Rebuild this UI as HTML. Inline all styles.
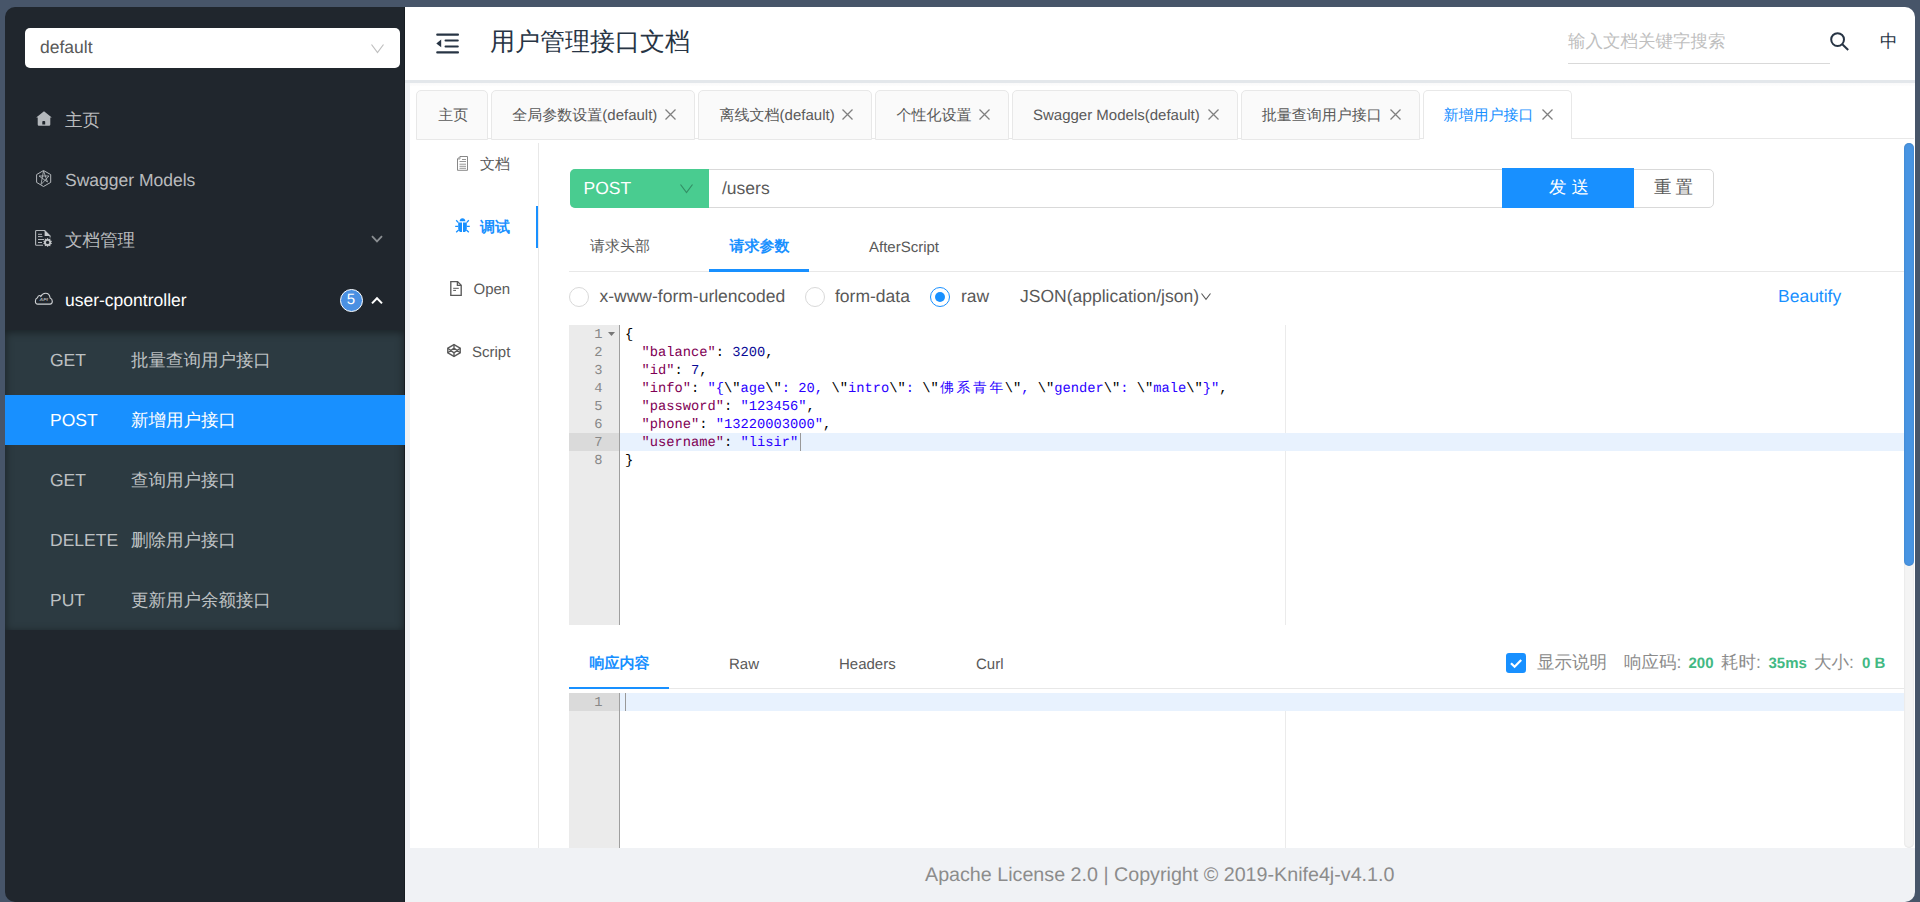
<!DOCTYPE html>
<html><head><meta charset="utf-8">
<style>
*{box-sizing:border-box;margin:0;padding:0}
html,body{width:1920px;height:902px;overflow:hidden;background:#475569;font-family:"Liberation Sans",sans-serif;position:relative;text-rendering:geometricPrecision}
.a{position:absolute;white-space:nowrap}
svg.a{overflow:visible}
#side{left:5px;top:7px;width:400px;height:895px;background:#20262d;border-radius:10px 0 0 10px;border-right:1px solid #171c21;overflow:hidden}
.mi{font-size:17.5px;color:rgba(255,255,255,.7);line-height:20px}
#sub{left:5px;top:330px;width:399px;height:300px;background:#2c3a41;box-shadow:inset 0 2px 8px rgba(0,0,0,.45)}
.sm{font-size:17.5px;color:rgba(255,255,255,.7);line-height:20px}
#head{left:405px;top:7px;width:1510px;height:73px;background:#fff;border-radius:0 10px 0 0}
#hshadow{left:405px;top:80px;width:1510px;height:3px;background:#e3e7eb;box-shadow:0 3px 3px -1px rgba(0,0,0,.02)}
#cont{left:405px;top:83px;width:1510px;height:765px;background:#f0f2f5}
#main{left:410px;top:83px;width:1505px;height:765px;background:#fff}
.tab{top:90px;height:50px;background:#fafafa;border:1px solid #e8e8e8;border-radius:5px 5px 0 0}
.tt{font-size:15px;color:#595959;line-height:20px;top:106px}
#foot{left:405px;top:848px;width:1510px;height:54px;background:#f0f2f5;border-radius:0 0 10px 0}
.ft{font-size:19.7px;color:#8c8c8c;line-height:20px}
.nv{font-size:15px;line-height:20px;color:#595959}
.nt{font-size:15px;line-height:20px;color:#595959}
.rd{width:20px;height:20px;border:1px solid #d9d9d9;border-radius:50%;background:#fff}
.rt{top:286px;font-size:17.5px;line-height:20px;color:#595959}
.cl{left:625px;padding-top:1.5px;font-family:"Liberation Mono",monospace;font-size:13.75px;line-height:18px;height:18px;white-space:pre;color:#000}
.cl b{font-weight:normal}
.k{color:#7f0055}.n{color:#0a0a96}.s{color:#2a00ff}
.e{font-style:normal;color:#000}
.cj{display:inline-block;width:16.5px;text-align:center;font-style:normal}
.gn{left:569px;padding-top:2px;width:33.5px;text-align:right;font-family:"Liberation Mono",monospace;font-size:13.75px;line-height:18px;color:#888}
.gr{top:654px;font-size:15px;line-height:20px;color:#42b983;font-weight:bold}
</style></head><body>
<!-- sidebar -->
<div id="side" class="a"></div>
<div class="a" style="left:25px;top:28px;width:375px;height:40px;background:#fff;border-radius:5px"></div>
<div class="a" style="left:40px;top:37px;font-size:17.5px;color:#595959;line-height:20px">default</div>
<svg class="a" style="left:371px;top:44px" width="13" height="9" viewBox="0 0 13 9"><path d="M0.5 0.5 L6.5 8.5 L12.5 0.5" fill="none" stroke="#bfbfbf" stroke-width="1.2"/></svg>

<div class="a mi" style="left:65px;top:110px">主页</div>
<div class="a mi" style="left:65px;top:170px">Swagger Models</div>
<div class="a mi" style="left:65px;top:230px">文档管理</div>
<div class="a mi" style="left:65px;top:290px;color:#fff">user-cpontroller</div>

<div id="sub" class="a"></div>
<div class="a" style="left:5px;top:395px;width:400px;height:50px;background:#1890ff"></div>
<div class="a sm" style="left:50px;top:350px">GET</div><div class="a sm" style="left:131px;top:350px">批量查询用户接口</div>
<div class="a sm" style="left:50px;top:410px;color:#fff">POST</div><div class="a sm" style="left:131px;top:410px;color:#fff">新增用户接口</div>
<div class="a sm" style="left:50px;top:470px">GET</div><div class="a sm" style="left:131px;top:470px">查询用户接口</div>
<div class="a sm" style="left:50px;top:530px">DELETE</div><div class="a sm" style="left:131px;top:530px">删除用户接口</div>
<div class="a sm" style="left:50px;top:590px">PUT</div><div class="a sm" style="left:131px;top:590px">更新用户余额接口</div>

<!-- header -->
<div id="head" class="a"></div>
<div id="hshadow" class="a"></div>
<div id="cont" class="a"></div>
<div id="main" class="a"></div>
<div class="a" style="left:410px;top:83px;width:1505px;height:3px;background:linear-gradient(#f9f9fa,#fdfdfd)"></div>
<div id="foot" class="a"></div>
<!-- sidebar icons -->
<svg class="a" style="left:36px;top:111px" width="16" height="15" viewBox="0 0 16 15"><path d="M8 0.3 L15.8 6.6 L14.3 6.6 L14.3 13.6 Q14.3 14.8 13.1 14.8 L2.9 14.8 Q1.7 14.8 1.7 13.6 L1.7 6.6 L0.2 6.6 Z M6.3 13.6 L6.3 10.8 Q6.3 9.9 7.2 9.9 L8.3 9.9 Q9.2 9.9 9.2 10.8 L9.2 13.6 Z" fill="#b4b8bc" fill-rule="evenodd"/></svg>
<svg class="a" style="left:36px;top:170px" width="16" height="17" viewBox="0 0 16 17" fill="none" stroke="#b4b8bc" stroke-width="1"><path d="M7.5 0.5 L14.7 4.6 L14.7 12.4 L7.5 16.5 L0.6 12.4 L0.6 4.6 Z"/><path d="M7.5 1 L11.5 12 L3 6 L13 6 L5 14.5 Z" stroke-width="0.85"/></svg>
<svg class="a" style="left:35px;top:230px" width="18" height="18" viewBox="0 0 18 18"><path d="M8 15.3 L1.5 15.3 Q0.6 15.3 0.6 14.4 L0.6 1.3 Q0.6 0.5 1.5 0.5 L9.7 0.5 L15.1 6 L15.1 7.5" fill="none" stroke="#b4b8bc" stroke-width="1.1"/><path d="M9.6 0.6 L15 6.1 L9.6 6.1 Z" fill="#c8cbce"/><path d="M3 4.3 H7 M3 6.6 H7.5 M3 9.5 H9 M3 12.5 H7" stroke="#b4b8bc" stroke-width="1"/><path d="M12.60 7.70 L13.65 9.17 L15.36 8.60 L15.35 10.40 L17.07 10.95 L16.00 12.40 L17.07 13.85 L15.35 14.40 L15.36 16.20 L13.65 15.63 L12.60 17.10 L11.55 15.63 L9.84 16.20 L9.85 14.40 L8.13 13.85 L9.20 12.40 L8.13 10.95 L9.85 10.40 L9.84 8.60 L11.55 9.17 Z M14.30 12.40 A1.7 1.7 0 1 0 10.90 12.40 A1.7 1.7 0 1 0 14.30 12.40 Z" fill="#c0c3c6" fill-rule="evenodd"/></svg>
<svg class="a" style="left:35px;top:292px" width="18" height="14" viewBox="0 0 18 14" fill="none" stroke="#d0d3d6" stroke-width="1.1"><path d="M2.8 12.1 Q0.4 12.1 0.4 9.2 Q0.4 6.6 2.4 5.8 Q3 3.4 4.6 3.5 Q5.3 3.6 5.8 4.4 Q7.3 1.2 10.5 1.2 Q14.6 1.2 15.1 6 Q17.3 6.8 17.3 9.3 Q17.3 12.1 15 12.1 Z"/><text x="4.6" y="9.4" font-size="4.4" font-family="Liberation Sans" font-weight="bold" font-style="italic" fill="#aeb2b5" stroke="none" textLength="8.2" lengthAdjust="spacingAndGlyphs">API</text></svg>
<svg class="a" style="left:371px;top:235px" width="12" height="8" viewBox="0 0 12 8"><path d="M1 1.2 L6 6.4 L11 1.2" fill="none" stroke="#8a8e92" stroke-width="1.8"/></svg>
<div class="a" style="left:339.5px;top:288.5px;width:23px;height:23px;border-radius:50%;background:#4a90e2;border:1.5px solid #fff;color:#fff;font-size:15px;line-height:20px;text-align:center">5</div>
<svg class="a" style="left:371px;top:296px" width="12" height="9" viewBox="0 0 12 9"><path d="M1 7.4 L6 2.2 L11 7.4" fill="none" stroke="#fff" stroke-width="2"/></svg>

<!-- tabs -->
<div class="a" style="left:416px;top:138px;width:1498px;height:1px;background:#e8e8e8"></div>
<div class="a tab" style="left:416px;width:72px;height:50px;background:#fafafa"></div>
<div class="a tt" style="left:438.3px;color:#595959">主页</div>
<div class="a tab" style="left:491px;width:204px;height:50px;background:#fafafa"></div>
<div class="a tt" style="left:512.3px;color:#595959">全局参数设置(default)</div>
<svg class="a" style="left:665.4px;top:109px" width="11" height="11" viewBox="0 0 11 11"><path d="M0.5 0.5 L10.5 10.5 M10.5 0.5 L0.5 10.5" stroke="#808080" stroke-width="1.3"/></svg>
<div class="a tab" style="left:698px;width:174px;height:50px;background:#fafafa"></div>
<div class="a tt" style="left:719.6px;color:#595959">离线文档(default)</div>
<svg class="a" style="left:842.0px;top:109px" width="11" height="11" viewBox="0 0 11 11"><path d="M0.5 0.5 L10.5 10.5 M10.5 0.5 L0.5 10.5" stroke="#808080" stroke-width="1.3"/></svg>
<div class="a tab" style="left:875px;width:134px;height:50px;background:#fafafa"></div>
<div class="a tt" style="left:896.5px;color:#595959">个性化设置</div>
<svg class="a" style="left:979.0px;top:109px" width="11" height="11" viewBox="0 0 11 11"><path d="M0.5 0.5 L10.5 10.5 M10.5 0.5 L0.5 10.5" stroke="#808080" stroke-width="1.3"/></svg>
<div class="a tab" style="left:1012px;width:226px;height:50px;background:#fafafa"></div>
<div class="a tt" style="left:1033.0px;color:#595959">Swagger Models(default)</div>
<svg class="a" style="left:1207.5px;top:109px" width="11" height="11" viewBox="0 0 11 11"><path d="M0.5 0.5 L10.5 10.5 M10.5 0.5 L0.5 10.5" stroke="#808080" stroke-width="1.3"/></svg>
<div class="a tab" style="left:1241px;width:179px;height:50px;background:#fafafa"></div>
<div class="a tt" style="left:1261.7px;color:#595959">批量查询用户接口</div>
<svg class="a" style="left:1390.4px;top:109px" width="11" height="11" viewBox="0 0 11 11"><path d="M0.5 0.5 L10.5 10.5 M10.5 0.5 L0.5 10.5" stroke="#808080" stroke-width="1.3"/></svg>
<div class="a tab" style="left:1423px;width:149px;height:49px;background:#fff;border-bottom:none"></div>
<div class="a tt" style="left:1443.5px;color:#1890ff">新增用户接口</div>
<svg class="a" style="left:1542.0px;top:109px" width="11" height="11" viewBox="0 0 11 11"><path d="M0.5 0.5 L10.5 10.5 M10.5 0.5 L0.5 10.5" stroke="#808080" stroke-width="1.3"/></svg>

<!-- vertical nav -->
<div class="a" style="left:538px;top:143px;width:1px;height:705px;background:#e8e8e8"></div>
<div class="a" style="left:535.5px;top:205.5px;width:2.5px;height:42.5px;background:#1890ff"></div>
<div class="a nv" style="left:480px;top:155px">文档</div>
<div class="a nv" style="left:480px;top:217.5px;color:#1890ff;font-weight:bold">调试</div>
<div class="a nv" style="left:473.5px;top:280px">Open</div>
<div class="a nv" style="left:472px;top:342.5px">Script</div>
<svg class="a" style="left:457px;top:156px" width="11" height="15" viewBox="0 0 11 15" fill="none" stroke="#7a7a7a" stroke-width="0.9"><path d="M3 0.5 L10.5 0.5 L10.5 14.3 L0.5 14.3 L0.5 3 Z"/><path d="M3 0.5 L3 3 L0.5 3" stroke-width="0.7"/><path d="M5 3.5 H9 M2.5 5.5 H9 M2.5 8.2 H9 M2.5 10.3 H9 M2.5 12.3 H9" stroke-width="0.8"/></svg>
<svg class="a" style="left:455px;top:218px" width="15" height="15" viewBox="0 0 15 15" fill="#1890ff"><path d="M4.6 3.3 Q4.9 0.3 7.5 0.3 Q10.1 0.3 10.4 3.3 Z"/><path d="M3.2 4.4 L7 4.4 L7 14 L5 14 Q3.5 13 3.2 11 Z M8 4.4 L11.8 4.4 L11.8 11 Q11.5 13 10 14 L8 14 Z"/><path d="M1.2 2.3 L3.4 4.6 M13.8 2.3 L11.6 4.6 M0.2 8.3 H3.3 M11.7 8.3 H14.8 M1.2 14.3 L3.6 12 M13.8 14.3 L11.4 12" stroke="#1890ff" stroke-width="1.3" fill="none"/></svg>
<svg class="a" style="left:450px;top:281px" width="12" height="15" viewBox="0 0 12 15" fill="none" stroke="#595959" stroke-width="1.35"><path d="M0.8 0.6 L7.6 0.6 L11.2 4.2 L11.2 14.3 L0.8 14.3 Z"/><path d="M7.4 0.8 L7.4 4.4 L11 4.4"/><path d="M3.2 7.3 H8.8 M3.2 9.4 H6" stroke-width="1"/></svg>
<svg class="a" style="left:447px;top:344px" width="14" height="13" viewBox="0 0 14 13" fill="none" stroke="#595959" stroke-width="1.4"><path d="M7 0.6 L13.2 4.2 L13.2 8.8 L7 12.4 L0.8 8.8 L0.8 4.2 Z"/><path d="M7 0.6 L7 4.2 M7 8.8 L7 12.4 M0.8 4.2 L7 8.8 L13.2 4.2 M0.8 8.8 L7 4.2 L13.2 8.8"/></svg>

<!-- url bar -->
<div class="a" style="left:569.5px;top:168.5px;width:1144px;height:39px;border:1px solid #d9d9d9;border-radius:5px;background:#fff"></div>
<div class="a" style="left:569.5px;top:168.5px;width:139px;height:39px;background:#49cc90;border-radius:5px 0 0 5px"></div>
<div class="a" style="left:583.5px;top:178px;font-size:17.5px;line-height:20px;color:#fff">POST</div>
<svg class="a" style="left:680px;top:184px" width="13" height="9" viewBox="0 0 13 9"><path d="M0.5 0.5 L6.5 8.5 L12.5 0.5" fill="none" stroke="rgba(0,0,0,.3)" stroke-width="1.2"/></svg>
<div class="a" style="left:722px;top:178px;font-size:17.5px;line-height:20px;color:#595959">/users</div>
<div class="a" style="left:1502px;top:168px;width:132px;height:40px;background:#1890ff"></div>
<div class="a" style="left:1549px;top:177px;font-size:17.5px;line-height:20px;color:#fff;letter-spacing:5px">发送</div>
<div class="a" style="left:1654px;top:177px;font-size:17.5px;line-height:20px;color:#595959;letter-spacing:4px">重置</div>

<!-- request tabs -->
<div class="a" style="left:569px;top:271px;width:1336px;height:1px;background:#e8e8e8"></div>
<div class="a" style="left:709px;top:269px;width:100px;height:2.5px;background:#1890ff"></div>
<div class="a nt" style="left:590px;top:237px">请求头部</div>
<div class="a nt" style="left:729.5px;top:237px;color:#1890ff;font-weight:bold">请求参数</div>
<div class="a nt" style="left:869px;top:238px">AfterScript</div>

<!-- radios -->
<div class="a rd" style="left:569px;top:287px"></div>
<div class="a rt" style="left:599.5px">x-www-form-urlencoded</div>
<div class="a rd" style="left:805px;top:287px"></div>
<div class="a rt" style="left:835px">form-data</div>
<div class="a rd" style="left:930px;top:287px;border-color:#1890ff"><div class="a" style="left:4px;top:4px;width:10px;height:10px;border-radius:50%;background:#1890ff"></div></div>
<div class="a rt" style="left:961px">raw</div>
<div class="a rt" style="left:1020px">JSON(application/json)</div>
<svg class="a" style="left:1201px;top:293px" width="10" height="7" viewBox="0 0 10 7"><path d="M0.5 0.5 L5 6.3 L9.5 0.5" fill="none" stroke="#595959" stroke-width="1.1"/></svg>
<div class="a rt" style="left:1778px;color:#1890ff">Beautify</div>


<!-- request editor -->
<div class="a" style="left:569px;top:325px;width:50px;height:300px;background:#ebebeb"></div>
<div class="a" style="left:619px;top:325px;width:1px;height:300px;background:#9f9f9f"></div>
<div class="a" style="left:1285px;top:325px;width:1px;height:300px;background:#ebebeb"></div>
<div class="a" style="left:620px;top:433px;width:1285px;height:18px;background:#e8f2fe"></div>
<div class="a" style="left:569px;top:433px;width:50px;height:18px;background:#dadada"></div>
<div class="a gn" style="top:325px">1</div>
<div class="a gn" style="top:343px">2</div>
<div class="a gn" style="top:361px">3</div>
<div class="a gn" style="top:379px">4</div>
<div class="a gn" style="top:397px">5</div>
<div class="a gn" style="top:415px">6</div>
<div class="a gn" style="top:433px">7</div>
<div class="a gn" style="top:451px">8</div>
<svg class="a" style="left:607.5px;top:332px" width="7" height="4" viewBox="0 0 7 4"><path d="M0 0 H7 L3.5 4 Z" fill="#777"/></svg>
<div class="a cl" style="top:325px">{</div>
<div class="a cl" style="top:343px">  <b class="k">"balance"</b>: <b class="n">3200</b>,</div>
<div class="a cl" style="top:361px">  <b class="k">"id"</b>: <b class="n">7</b>,</div>
<div class="a cl" style="top:379px">  <b class="k">"info"</b>: <b class="s">"{<i class="e">\"</i>age<i class="e">\"</i>: 20, <i class="e">\"</i>intro<i class="e">\"</i>: <i class="e">\"</i><i class="cj">佛</i><i class="cj">系</i><i class="cj">青</i><i class="cj">年</i><i class="e">\"</i>, <i class="e">\"</i>gender<i class="e">\"</i>: <i class="e">\"</i>male<i class="e">\"</i>}"</b>,</div>
<div class="a cl" style="top:397px">  <b class="k">"password"</b>: <b class="s">"123456"</b>,</div>
<div class="a cl" style="top:415px">  <b class="k">"phone"</b>: <b class="s">"13220003000"</b>,</div>
<div class="a cl" style="top:433px">  <b class="k">"username"</b>: <b class="s">"lisir"</b></div>
<div class="a cl" style="top:451px">}</div>
<div class="a" style="left:799.5px;top:433px;width:1.3px;height:18px;background:#999"></div>

<!-- response tabs -->
<div class="a" style="left:569px;top:688px;width:1336px;height:1px;background:#e8e8e8"></div>
<div class="a" style="left:569px;top:686.5px;width:100px;height:2.5px;background:#1890ff"></div>
<div class="a nt" style="left:589.5px;top:653.5px;color:#1890ff;font-weight:bold">响应内容</div>
<div class="a nt" style="left:729px;top:654.5px">Raw</div>
<div class="a nt" style="left:839px;top:654.5px">Headers</div>
<div class="a nt" style="left:976px;top:654.5px">Curl</div>
<div class="a" style="left:1506px;top:653px;width:20px;height:20px;background:#1890ff;border-radius:3px"></div>
<svg class="a" style="left:1506px;top:653px" width="20" height="20" viewBox="0 0 20 20"><path d="M5 10.2 L8.6 13.8 L15.2 7" fill="none" stroke="#fff" stroke-width="2.2"/></svg>
<div class="a" style="left:1537px;top:652px;font-size:17.5px;line-height:20px;color:#8c8c8c">显示说明</div>
<div class="a" style="left:1624px;top:652px;font-size:17.5px;line-height:20px;color:#8c8c8c">响应码:</div>
<div class="a gr" style="left:1688.5px">200</div>
<div class="a" style="left:1721px;top:652px;font-size:17.5px;line-height:20px;color:#8c8c8c">耗时:</div>
<div class="a gr" style="left:1768.5px">35ms</div>
<div class="a" style="left:1814px;top:652px;font-size:17.5px;line-height:20px;color:#8c8c8c">大小:</div>
<div class="a gr" style="left:1862px">0 B</div>

<!-- response editor -->
<div class="a" style="left:569px;top:693px;width:50px;height:155px;background:#ebebeb"></div>
<div class="a" style="left:619px;top:693px;width:1px;height:155px;background:#9f9f9f"></div>
<div class="a" style="left:1285px;top:693px;width:1px;height:155px;background:#ebebeb"></div>
<div class="a" style="left:620px;top:693px;width:1285px;height:18px;background:#e8f2fe"></div>
<div class="a" style="left:569px;top:693px;width:50px;height:18px;background:#dadada"></div>
<div class="a gn" style="top:693px">1</div>
<div class="a" style="left:625px;top:693px;width:1.3px;height:18px;background:#999"></div>

<!-- scrollbar -->
<div class="a" style="left:1904px;top:143px;width:10px;height:705px;background:#f4f4f4;border-radius:5px;box-shadow:inset 0 0 2px rgba(0,0,0,.12)"></div>
<div class="a" style="left:1904px;top:143px;width:10px;height:423px;background:#4894e2;border-radius:5px;box-shadow:inset 0 0 2px rgba(0,0,0,.18)"></div>

<!-- header content -->
<svg class="a" style="left:436px;top:33px" width="24" height="21" viewBox="0 0 24 21" fill="#273444"><rect x="0.2" y="0.6" width="22.8" height="2.1" rx="1"/><rect x="8.5" y="6.6" width="14.3" height="2" rx="1"/><rect x="8.5" y="12.6" width="14.3" height="2" rx="1"/><rect x="0.2" y="18.3" width="22.8" height="2.1" rx="1"/><path d="M0.3 10.4 L5.2 6.5 L5.2 14.3 Z"/></svg>
<div class="a" style="left:490px;top:27px;font-size:25px;line-height:30px;color:#273444">用户管理接口文档</div>
<div class="a" style="left:1568px;top:31px;font-size:17.5px;line-height:20px;color:#bfbfbf">输入文档关键字搜索</div>
<div class="a" style="left:1568px;top:62.5px;width:262px;height:1px;background:#d9d9d9"></div>
<svg class="a" style="left:1830px;top:32px" width="20" height="19" viewBox="0 0 20 19" fill="none" stroke="#273444" stroke-width="2"><circle cx="7.6" cy="7.6" r="6.4"/><path d="M12.3 12.3 L18.2 18"/></svg>
<div class="a" style="left:1880px;top:31px;font-size:17.5px;line-height:20px;color:#273444">中</div>

<div class="a ft" style="left:925px;top:865px">Apache License 2.0 | Copyright © 2019-Knife4j-v4.1.0</div>
</body></html>
